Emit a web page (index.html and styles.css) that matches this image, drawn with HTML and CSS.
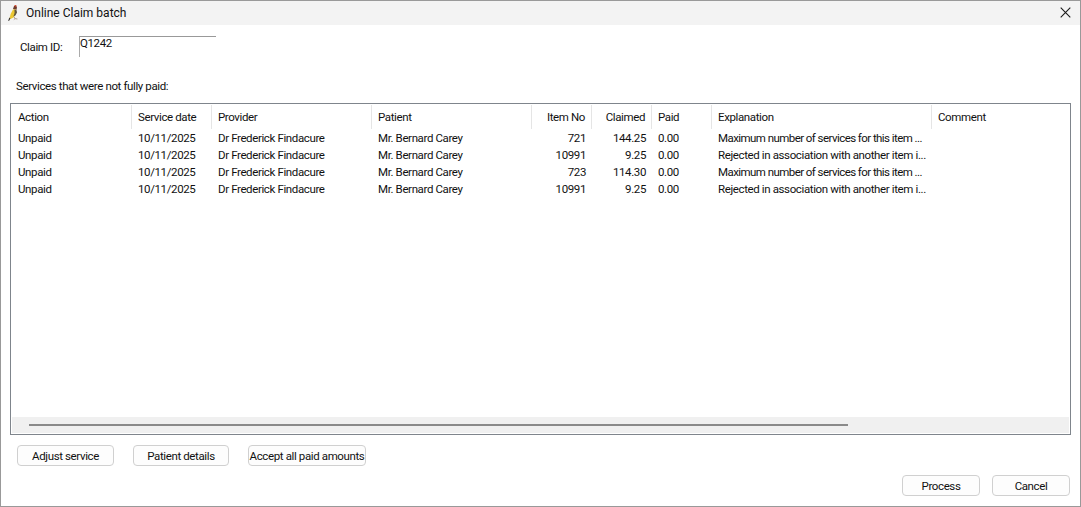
FILE: index.html
```html
<!DOCTYPE html>
<html lang="en">

<head>
  <meta charset="UTF-8">
  <title>Online Claim batch</title>
  <link rel="stylesheet" href="styles.css">
</head>

<body>
  <div class="window">
    <div class="titlebar">
      <svg class="app-icon" width="12" height="17" viewBox="0 0 12 17">
        <path d="M5 4 L6 1 L8 .6 L9 2.6 L8.4 5 Z" fill="#6e3a2e"/>
        <path d="M6.4 .2 L8.2 0 L8.6 1.4 L6.8 1.6 Z" fill="#d5432a"/>
        <path d="M5 4.4 L8 4.6 L8.2 8 L5.6 12.4 L2.4 14 L1.6 13 L2.6 9 Z" fill="#ecc832"/>
        <path d="M6.4 4.6 L8.6 5.2 L9 7.6 L7.4 10.4 L5.4 11.4 L6.6 8 Z" fill="#5f5640"/>
        <path d="M2.4 13.4 L1 16 L.2 15.8 L1.4 12.6 Z" fill="#35332e"/>
        <path d="M6 11.6 L7 13.6 L9.4 14 M7 13.6 L5.8 14.6" fill="none" stroke="#a08a78" stroke-width=".8"/>
      </svg>
      <span class="title">Online Claim batch</span>
      <svg class="close-icon" width="11" height="11" viewBox="0 0 11 11">
        <path d="M.7 .7 L10.3 10.3 M10.3 .7 L.7 10.3" stroke="#1a1a1a" stroke-width="1.1" fill="none"/>
      </svg>
    </div>

    <div class="content">
      <div class="claim-row">
        <label class="claim-label">Claim ID:</label>
        <div class="claim-input">Q1242</div>
      </div>

      <div class="services-label">Services that were not fully paid:</div>

      <div class="list-frame">
        <div class="list-body">
          <div class="row head">
            <div class="cell sep">Action</div>
            <div class="cell sep">Service date</div>
            <div class="cell sep">Provider</div>
            <div class="cell sep">Patient</div>
            <div class="cell sep num">Item No</div>
            <div class="cell sep num">Claimed</div>
            <div class="cell sep">Paid</div>
            <div class="cell sep">Explanation</div>
            <div class="cell">Comment</div>
          </div>
          <div class="row">
            <div class="cell">Unpaid</div>
            <div class="cell">10/11/2025</div>
            <div class="cell">Dr Frederick Findacure</div>
            <div class="cell">Mr. Bernard Carey</div>
            <div class="cell num">721</div>
            <div class="cell num">144.25</div>
            <div class="cell">0.00</div>
            <div class="cell tight">Maximum number of services for this item ...</div>
            <div class="cell"></div>
          </div>
          <div class="row">
            <div class="cell">Unpaid</div>
            <div class="cell">10/11/2025</div>
            <div class="cell">Dr Frederick Findacure</div>
            <div class="cell">Mr. Bernard Carey</div>
            <div class="cell num">10991</div>
            <div class="cell num">9.25</div>
            <div class="cell">0.00</div>
            <div class="cell">Rejected in association with another item i...</div>
            <div class="cell"></div>
          </div>
          <div class="row">
            <div class="cell">Unpaid</div>
            <div class="cell">10/11/2025</div>
            <div class="cell">Dr Frederick Findacure</div>
            <div class="cell">Mr. Bernard Carey</div>
            <div class="cell num">723</div>
            <div class="cell num">114.30</div>
            <div class="cell">0.00</div>
            <div class="cell tight">Maximum number of services for this item ...</div>
            <div class="cell"></div>
          </div>
          <div class="row">
            <div class="cell">Unpaid</div>
            <div class="cell">10/11/2025</div>
            <div class="cell">Dr Frederick Findacure</div>
            <div class="cell">Mr. Bernard Carey</div>
            <div class="cell num">10991</div>
            <div class="cell num">9.25</div>
            <div class="cell">0.00</div>
            <div class="cell">Rejected in association with another item i...</div>
            <div class="cell"></div>
          </div>
        </div>
        <div class="scrollbar"><div class="thumb"></div></div>
      </div>

      <div class="actions">
        <button class="btn btn-adjust">Adjust service</button>
        <button class="btn btn-patient">Patient details</button>
        <button class="btn btn-accept">Accept all paid amounts</button>
      </div>

      <div class="footer">
        <button class="btn btn-foot">Process</button>
        <button class="btn btn-foot">Cancel</button>
      </div>
    </div>
  </div>
</body>

</html>
```

FILE: styles.css
```css
html, body {
  margin: 0;
  height: 100%;
  overflow: hidden;
}

body {
  font-family: Roboto, "Noto Sans", sans-serif;
  font-size: 11.5px;
  letter-spacing: -0.38px;
  color: #111;
  background-color: #fff;
}

.window {
  width: 1081px;
  height: 507px;
  box-sizing: border-box;
  border: 1px solid #999;
  display: flex;
  flex-direction: column;
}

.titlebar {
  height: 24px;
  flex: none;
  display: flex;
  align-items: center;
  padding: 0 9px 0 7px;
  background-color: #f3f3f3;
}

.app-icon { flex: none; }

.title {
  margin-left: 6px;
  font-size: 12px;
  letter-spacing: 0;
}

.close-icon {
  margin-left: auto;
  margin-bottom: 2px;
  flex: none;
}

.content {
  flex: 1;
  display: flex;
  flex-direction: column;
  padding: 11px 9px 9px 9px;
}

.claim-row {
  display: flex;
  height: 21px;
}

.claim-label {
  width: 69px;
  padding: 4px 0 0 10px;
  box-sizing: border-box;
}

.claim-input {
  width: 136px;
  height: 20px;
  line-height: 13px;
  border-top: 1px solid #999;
  border-left: 1px solid #aaa;
}

.services-label {
  margin-top: 21px;
  padding-left: 6px;
  height: 17px;
  line-height: 17px;
}

.list-frame {
  margin-top: 8px;
  width: 1061px;
  height: 332px;
  box-sizing: border-box;
  border: 1px solid #7f858c;
  display: flex;
  flex-direction: column;
}

.list-body {
  flex: 1;
  padding-top: 1px;
}

.row {
  display: grid;
  grid-template-columns: 121px 80px 160px 160px 60px 60px 60px 220px 1fr;
  height: 17px;
  line-height: 17px;
}

.row.head {
  height: 24px;
  line-height: 24px;
  margin-bottom: 1px;
}

.cell {
  padding: 0 5px 0 6px;
  white-space: nowrap;
  overflow: hidden;
}

.cell:first-child { padding-left: 7px; }

.tight { letter-spacing: -0.56px; }

.sep { border-right: 1px solid #e5e5e5; }

.num {
  text-align: right;
  padding-right: 6px;
}

.scrollbar {
  height: 16px;
  flex: none;
  display: flex;
  align-items: center;
  margin: 0 1px 1px;
  padding-left: 17px;
  background-color: #f0f0f0;
}

.thumb {
  width: 819px;
  height: 2px;
  background-color: #8a8a8a;
}

.actions {
  margin-top: 10px;
  padding-left: 7px;
  display: flex;
  gap: 19px;
}

.footer {
  margin-top: 9px;
  display: flex;
  justify-content: flex-end;
  gap: 12px;
  padding-right: 1px;
}

.btn {
  height: 21px;
  padding: 0;
  font: inherit;
  letter-spacing: inherit;
  color: #111;
  background-color: #fdfdfd;
  border: 1px solid #d0d0d0;
  border-radius: 4px;
  white-space: nowrap;
}

.btn-adjust { width: 97px; }
.btn-patient { width: 96px; }
.btn-accept { width: 118px; }
.btn-foot { width: 78px; }
```
